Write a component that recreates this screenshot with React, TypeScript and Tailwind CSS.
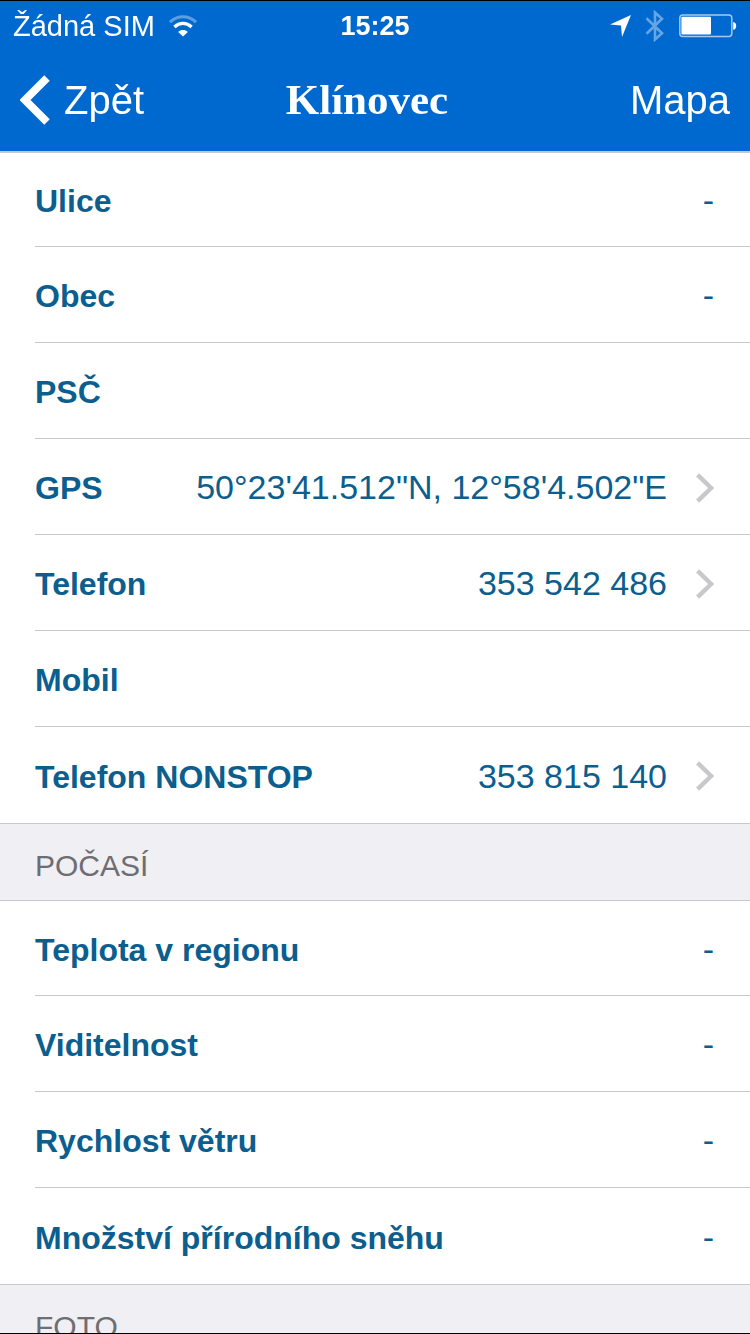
import React from 'react';

type Row = { label: string; value?: string; href?: string };
type Section = { title?: string; rows: Row[] };

const sections: Section[] = [
  {
    rows: [
      { label: 'Ulice', value: '-' },
      { label: 'Obec', value: '-' },
      { label: 'PSČ' },
      { label: 'GPS', value: '50°23\'41.512"N, 12°58\'4.502"E', href: '#gps' },
      { label: 'Telefon', value: '353 542 486', href: 'tel:353542486' },
      { label: 'Mobil' },
      { label: 'Telefon NONSTOP', value: '353 815 140', href: 'tel:353815140' },
    ],
  },
  {
    title: 'POČASÍ',
    rows: [
      { label: 'Teplota v regionu', value: '-' },
      { label: 'Viditelnost', value: '-' },
      { label: 'Rychlost větru', value: '-' },
      { label: 'Množství přírodního sněhu', value: '-' },
    ],
  },
  { title: 'FOTO', rows: [] },
];

function WifiIcon() {
  return (
    <svg viewBox="0 0 28 22" className="h-[22px] w-7" fill="none" aria-hidden="true">
      <path d="M1 7.2C8.4-.1 19.6-.1 27 7.2" stroke="#fff" strokeOpacity=".36" strokeWidth="3.2" />
      <path d="M5.4 11.9C10.5 7.2 17.5 7.2 22.6 11.9" stroke="#fff" strokeWidth="3.4" />
      <path d="M9.2 17C12 14.4 16 14.4 18.8 17L14 21.4Z" fill="#fff" />
    </svg>
  );
}

function LocationIcon() {
  return (
    <svg viewBox="0 0 21 22" className="h-[22px] w-[21px]" aria-hidden="true">
      <path d="M21 0L12 22L11 10.4L0 9.6Z" fill="#fff" />
    </svg>
  );
}

function BluetoothIcon() {
  return (
    <svg viewBox="0 0 20 32" className="h-8 w-5" fill="none" aria-hidden="true">
      <path d="M1.5 8.2L17 23.2L10 29.5V2.5L17 8.8L1.5 23.8" stroke="#fff" strokeOpacity=".4" strokeWidth="2.6" />
    </svg>
  );
}

function BatteryIcon() {
  return (
    <svg viewBox="0 0 58 24" className="h-6 w-[58px]" fill="none" aria-hidden="true">
      <rect x=".8" y="1" width="52" height="21.4" rx="3" stroke="#fff" strokeOpacity=".65" strokeWidth="1.5" />
      <rect x="2.4" y="2.8" width="29.6" height="17.8" rx="1" fill="#fff" />
      <path d="M54.2 8C58.2 8.4 58.2 15.4 54.2 15.8Z" fill="#fff" />
    </svg>
  );
}

function BackIcon() {
  return (
    <svg viewBox="0 0 30 50" className="h-[50px] w-[30px]" fill="none" aria-hidden="true">
      <path d="M27 3L5 25L27 47" stroke="#fff" strokeWidth="7.8" />
    </svg>
  );
}

function Disclosure() {
  return (
    <svg viewBox="0 0 19 30" className="ml-7 h-[30px] w-[19px] shrink-0" fill="none" aria-hidden="true">
      <path d="M2.6 1.8L16.2 15L2.6 28.2" stroke="#c7c7cc" strokeWidth="4.4" />
    </svg>
  );
}

const rowClass =
  'flex h-24 items-center border-b border-[#c8c7cc] pt-0.5 pr-9 group-first:h-[95px] group-last:border-b-0';

function RowContent({ row }: { row: Row }) {
  return (
    <>
      <span className="flex flex-1 items-baseline justify-between">
        <span className="text-[32px] font-bold">{row.label}</span>
        <span className="text-[34px]">{row.value}</span>
      </span>
      {row.href && <Disclosure />}
    </>
  );
}

export default function App() {
  return (
    <div className="flex h-screen flex-col overflow-hidden border-y border-black bg-white font-['Liberation_Sans',Arial,sans-serif] text-[#0b5e8e]">
      <header className="relative z-10 shrink-0 bg-[#0069d0] text-white shadow-[0_2px_0_#c8c7cc]">
        <div className="grid h-12 grid-cols-[1fr_auto_1fr] items-center px-[13px] pt-0.5">
          <div className="flex items-center gap-3.5">
            <span className="text-[29px] leading-8">Žádná SIM</span>
            <WifiIcon />
          </div>
          <time className="text-[27px] leading-8 font-bold">15:25</time>
          <div className="flex items-center justify-end gap-3.5">
            <LocationIcon />
            <BluetoothIcon />
            <BatteryIcon />
          </div>
        </div>
        <nav className="grid h-[102px] grid-cols-[1fr_auto_1fr] items-center px-5 text-[40px] leading-[48px]">
          <button type="button" className="flex items-center gap-3.5 justify-self-start">
            <BackIcon />
            Zpět
          </button>
          <h1 className="pr-4 font-['Liberation_Serif',serif] text-[43px] font-bold">Klínovec</h1>
          <button type="button" className="justify-self-end">
            Mapa
          </button>
        </nav>
      </header>

      <main className="min-h-0 flex-1 overflow-y-auto bg-[#efeff4] [scrollbar-width:none]">
        {sections.map((section, i) => (
          <section key={i}>
            {section.title && (
              <h2 className="flex h-[76px] items-center pt-2 pl-[35px] text-[30px] leading-9 text-[#6d6d72]">
                {section.title}
              </h2>
            )}
            {section.rows.length > 0 && (
              <ul className="border-y border-[#c8c7cc] bg-white">
                {section.rows.map((row) => (
                  <li key={row.label} className="group pl-[35px]">
                    {row.href ? (
                      <a href={row.href} className={rowClass}>
                        <RowContent row={row} />
                      </a>
                    ) : (
                      <div className={rowClass}>
                        <RowContent row={row} />
                      </div>
                    )}
                  </li>
                ))}
              </ul>
            )}
          </section>
        ))}
      </main>
    </div>
  );
}
